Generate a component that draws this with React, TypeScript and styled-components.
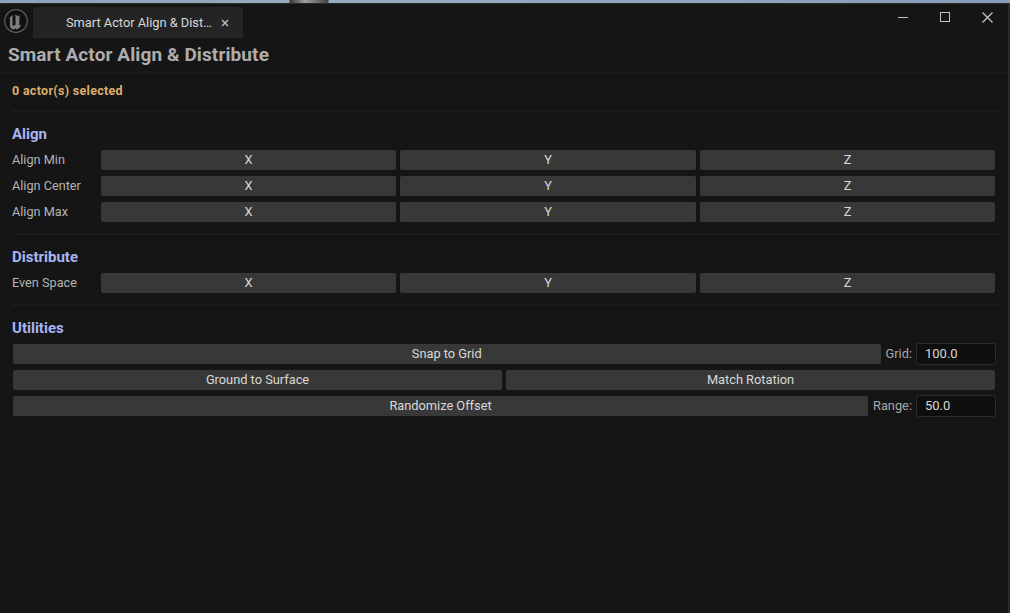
import React from "react";
import styled, { createGlobalStyle } from "styled-components";

const GlobalStyle = createGlobalStyle`
  html, body {
    margin: 0;
    padding: 0;
    background: #151515;
    font-family: Roboto, "Liberation Sans", sans-serif;
    overflow: hidden;
  }
`;

const Page = styled.div`
  width: 1010px;
  height: 613px;
  display: flex;
  flex-direction: column;
  background: #151515;
`;

// sliver of the desktop showing above the window
const DesktopStrip = styled.div`
  height: 3px;
  flex: none;
  background: linear-gradient(
    90deg,
    #8fa0bb 0,
    #9aa9c2 289px,
    #3a3a38 290px,
    #a09f9a 305px,
    #46443f 328px,
    #9aa9c2 329px,
    #8b9cb8 100%
  );
`;

const Window = styled.div`
  flex: 1;
  display: flex;
  flex-direction: column;
  border-top: 1px solid #2a2a2a;
  border-right: 2px solid #2a2a2a;
  min-height: 0;
`;

const TitleBar = styled.div`
  height: 34px;
  flex: none;
  display: flex;
  align-items: flex-end;
  padding-left: 3px;
`;

const LogoWrap = styled.div`
  width: 26px;
  height: 26px;
  margin: 0 4px 4px 0;
`;

const Tab = styled.div`
  width: 210px;
  height: 31px;
  box-sizing: border-box;
  padding: 0 14px 0 33px;
  display: flex;
  align-items: center;
  justify-content: space-between;
  background: #242424;
  border-radius: 3px 3px 0 0;
  color: #d8d8d8;
  font-size: 12.8px;
`;

const TabClose = styled.span`
  color: #b8b8b8;
  display: flex;
`;

const WindowButtons = styled.div`
  margin-left: auto;
  align-self: flex-start;
  display: flex;
  align-items: center;
  height: 26px;
  gap: 32px;
  padding-right: 15px;
  color: #c4c4c4;
`;

const Heading = styled.h1`
  margin: 0;
  height: 36px;
  flex: none;
  padding-left: 8px;
  display: flex;
  align-items: center;
  font-size: 19px;
  font-weight: 700;
  letter-spacing: 0.1px;
  color: #adadad;
  border-bottom: 3px solid #1a1a1a;
  box-sizing: border-box;
`;

const Body = styled.div`
  padding: 0 10px 0 12px;
  display: flex;
  flex-direction: column;
`;

const Status = styled.div`
  height: 32px;
  margin-bottom: 4px;
  display: flex;
  align-items: center;
  font-size: 12.5px;
  font-weight: 700;
  letter-spacing: 0.3px;
  color: #dcae6e;
`;

const Divider = styled.div`
  height: 2px;
  background: #1b1b1b;
  margin-right: -1px;
`;

const SectionTitle = styled.div`
  height: 20px;
  margin-top: 12px;
  display: flex;
  align-items: center;
  font-size: 15px;
  font-weight: 700;
  color: #a8b4f4;
`;

const Rows = styled.div`
  display: flex;
  flex-direction: column;
  gap: 6px;
  margin-top: 6px;
  padding-bottom: 11px;
`;

const AxisRow = styled.div`
  display: grid;
  grid-template-columns: 85px 295px 296px 295px;
  column-gap: 4px;
  align-items: center;
`;

const ToolRow = styled.div`
  display: flex;
  align-items: center;
  height: 20px;
  gap: 4px;
  padding-left: 1px;
  margin-right: 3px;
`;

const RowLabel = styled.span`
  font-size: 12.7px;
  color: #b4b4b4;
  padding-bottom: 2px;
`;

const Button = styled.button`
  flex: 1;
  height: 20px;
  padding: 0 0 2px;
  border: 0;
  border-radius: 2px;
  background: #383838;
  color: #d8d8d8;
  font-family: inherit;
  font-size: 12.8px;
`;

const FieldLabel = styled.span`
  font-size: 12.8px;
  color: #a8a8a8;
  margin-left: 1px;
  padding-bottom: 2px;
`;

const NumberInput = styled.input`
  width: 80px;
  height: 22px;
  box-sizing: border-box;
  border: 1px solid #2e2e2e;
  border-radius: 3px;
  background: #0e0e0e;
  color: #d8d8d8;
  font-family: inherit;
  font-size: 13px;
  padding: 0 0 2px 8px;
  margin-right: -1px;
  outline: none;
`;

const UnrealLogo = () => (
  <svg width="26" height="26" viewBox="0 0 26 26">
    <circle cx="13" cy="13" r="11.3" fill="#111" stroke="#5e5e5e" strokeWidth="1.2" />
    <path
      transform="translate(-2.2 -1.8) scale(1.17)"
      d="M7.500 10c1-1.200 2.300-2.100 3.400-2.500-.7.8-.9 1.500-.9 2.300v6.100c0 .8.9 1 1.600.6l1-.7V9c0-.7-.2-1.300-.6-1.600 1 .1 2 .7 2.600 1.400l1.400-1.200c.3 2-.2 3-.2 4.200v4.800l1.700-1c-.6 2-2.300 3.700-3.900 4.300l-.9-1.100-1.800 1.100c-1.900-.4-3.100-1.700-3.100-3.500V10.800c0-.4-.4-.8-.3-.8z"
      fill="#7e7e7e"
    />
  </svg>
);

const axes = ["X", "Y", "Z"];

const App = () => {
  return (
    <Page>
      <GlobalStyle />
      <DesktopStrip />
      <Window>
        <TitleBar>
          <LogoWrap>
            <UnrealLogo />
          </LogoWrap>
          <Tab>
            <span>Smart Actor Align &amp; Dist…</span>
            <TabClose>
              <svg width="8" height="8" viewBox="0 0 8 8">
                <path d="M1 1l6 6M7 1l-6 6" stroke="currentColor" strokeWidth="1.5" />
              </svg>
            </TabClose>
          </Tab>
          <WindowButtons>
            <svg width="10" height="10" viewBox="0 0 10 10">
              <path d="M0 5.500h10" stroke="currentColor" />
            </svg>
            <svg width="10" height="10" viewBox="0 0 10 10">
              <rect x="0.5" y="0.500" width="9" height="9" fill="none" stroke="currentColor" />
            </svg>
            <svg width="11" height="11" viewBox="0 0 11 11">
              <path d="M0.500 0.500l10 10M10.500 0.500l-10 10" stroke="currentColor" strokeWidth="1.300" />
            </svg>
          </WindowButtons>
        </TitleBar>
        <Heading>Smart Actor Align &amp; Distribute</Heading>
        <Body>
          <Status>0 actor(s) selected</Status>
          <Divider />
          <SectionTitle>Align</SectionTitle>
          <Rows>
            {["Align Min", "Align Center", "Align Max"].map((label) => (
              <AxisRow key={label}>
                <RowLabel>{label}</RowLabel>
                {axes.map((a) => (
                  <Button key={a}>{a}</Button>
                ))}
              </AxisRow>
            ))}
          </Rows>
          <Divider />
          <SectionTitle>Distribute</SectionTitle>
          <Rows>
            <AxisRow>
              <RowLabel>Even Space</RowLabel>
              {axes.map((a) => (
                <Button key={a}>{a}</Button>
              ))}
            </AxisRow>
          </Rows>
          <Divider />
          <SectionTitle>Utilities</SectionTitle>
          <Rows>
            <ToolRow>
              <Button>Snap to Grid</Button>
              <FieldLabel>Grid:</FieldLabel>
              <NumberInput defaultValue="100.0" />
            </ToolRow>
            <ToolRow>
              <Button>Ground to Surface</Button>
              <Button>Match Rotation</Button>
            </ToolRow>
            <ToolRow>
              <Button>Randomize Offset</Button>
              <FieldLabel>Range:</FieldLabel>
              <NumberInput defaultValue="50.0" />
            </ToolRow>
          </Rows>
        </Body>
      </Window>
    </Page>
  );
};

export default App;
